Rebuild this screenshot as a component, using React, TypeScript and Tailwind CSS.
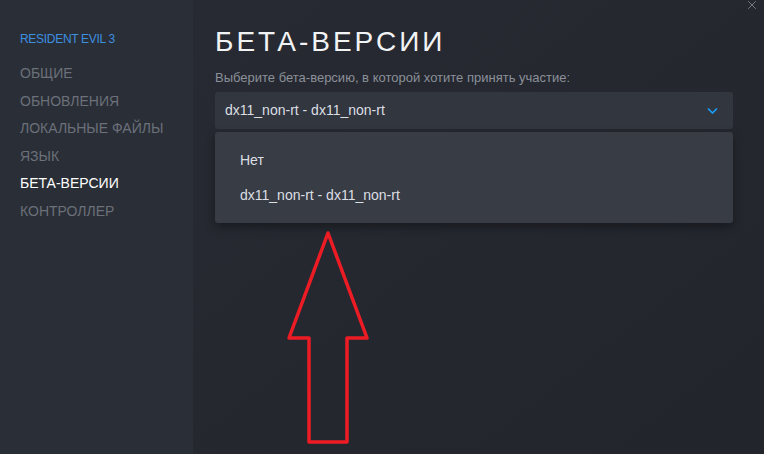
import { ChevronDown, X } from 'lucide-react';

const sections = ['Общие', 'Обновления', 'Локальные файлы', 'Язык', 'Бета-версии', 'Контроллер'];

const UpArrow = () => (
  // red annotation arrow drawn over the page
  <svg className="absolute left-[286px] top-[230px]" width="86" height="216" viewBox="0 0 86 216">
    <polygon
      points="42,3 81,108 61,108 61,212 23,212 23,108 3,108"
      fill="none"
      stroke="#ed1c24"
      strokeWidth="3.5"
      strokeLinejoin="round"
    />
  </svg>
);

const App = () => {
  return (
    <div
      className="relative flex h-[454px] w-[764px] overflow-hidden bg-[#23262e]"
      style={{ fontFamily: '"Liberation Sans", Arial, sans-serif' }}
    >
      {/* Sidebar */}
      <aside className="w-[193px] shrink-0 bg-[#2a2e36] pt-[32px] pl-[20px]">
        <div className="text-[12px] leading-[14px] tracking-[-0.3px] uppercase text-[#3d8fe0]">Resident Evil 3</div>
        <nav className="mt-[14px] flex flex-col">
          {sections.map((s) => (
            <div
              key={s}
              className={`h-[27.5px] text-[14px] leading-[27.5px] uppercase ${
                s === 'Бета-версии' ? 'text-white' : 'text-[#6b707a]'
              }`}
            >
              {s}
            </div>
          ))}
        </nav>
      </aside>

      {/* Main */}
      <main className="relative flex-1 bg-gradient-to-br from-[#272a32] to-[#22252c] pl-[22px] pr-[31px] pt-[26px]">
        <button className="absolute right-[5px] top-[-2px] text-[#7d838b]">
          <X className="h-[14px] w-[14px]" strokeWidth={1.6} />
        </button>
        <h1 className="text-[28px] leading-[32px] tracking-[3px] uppercase text-[#f2f3f4]">Бета-версии</h1>
        <p className="mt-[12px] text-[13px] leading-[16px] text-[#8b9099]">
          Выберите бета-версию, в которой хотите принять участие:
        </p>
        <div className="mt-[6px] flex h-[37px] items-center justify-between rounded-[3px] bg-[#32363f] pl-[10px] pr-[12px]">
          <span className="text-[14px] text-[#dcdfe3]">dx11_non-rt - dx11_non-rt</span>
          <ChevronDown className="h-[16px] w-[17px] text-[#1a9fff]" strokeWidth={2.6} />
        </div>
        <div className="mt-[3px] flex h-[91px] flex-col justify-center gap-[19px] rounded-[3px] bg-[#383c45] pl-[25px] shadow-[0_4px_10px_rgba(0,0,0,0.35)]">
          <div className="text-[14px] leading-[16px] text-[#dcdfe3]">Нет</div>
          <div className="text-[14px] leading-[16px] text-[#dcdfe3]">dx11_non-rt - dx11_non-rt</div>
        </div>
      </main>

      <UpArrow />
    </div>
  );
};

export default App;
